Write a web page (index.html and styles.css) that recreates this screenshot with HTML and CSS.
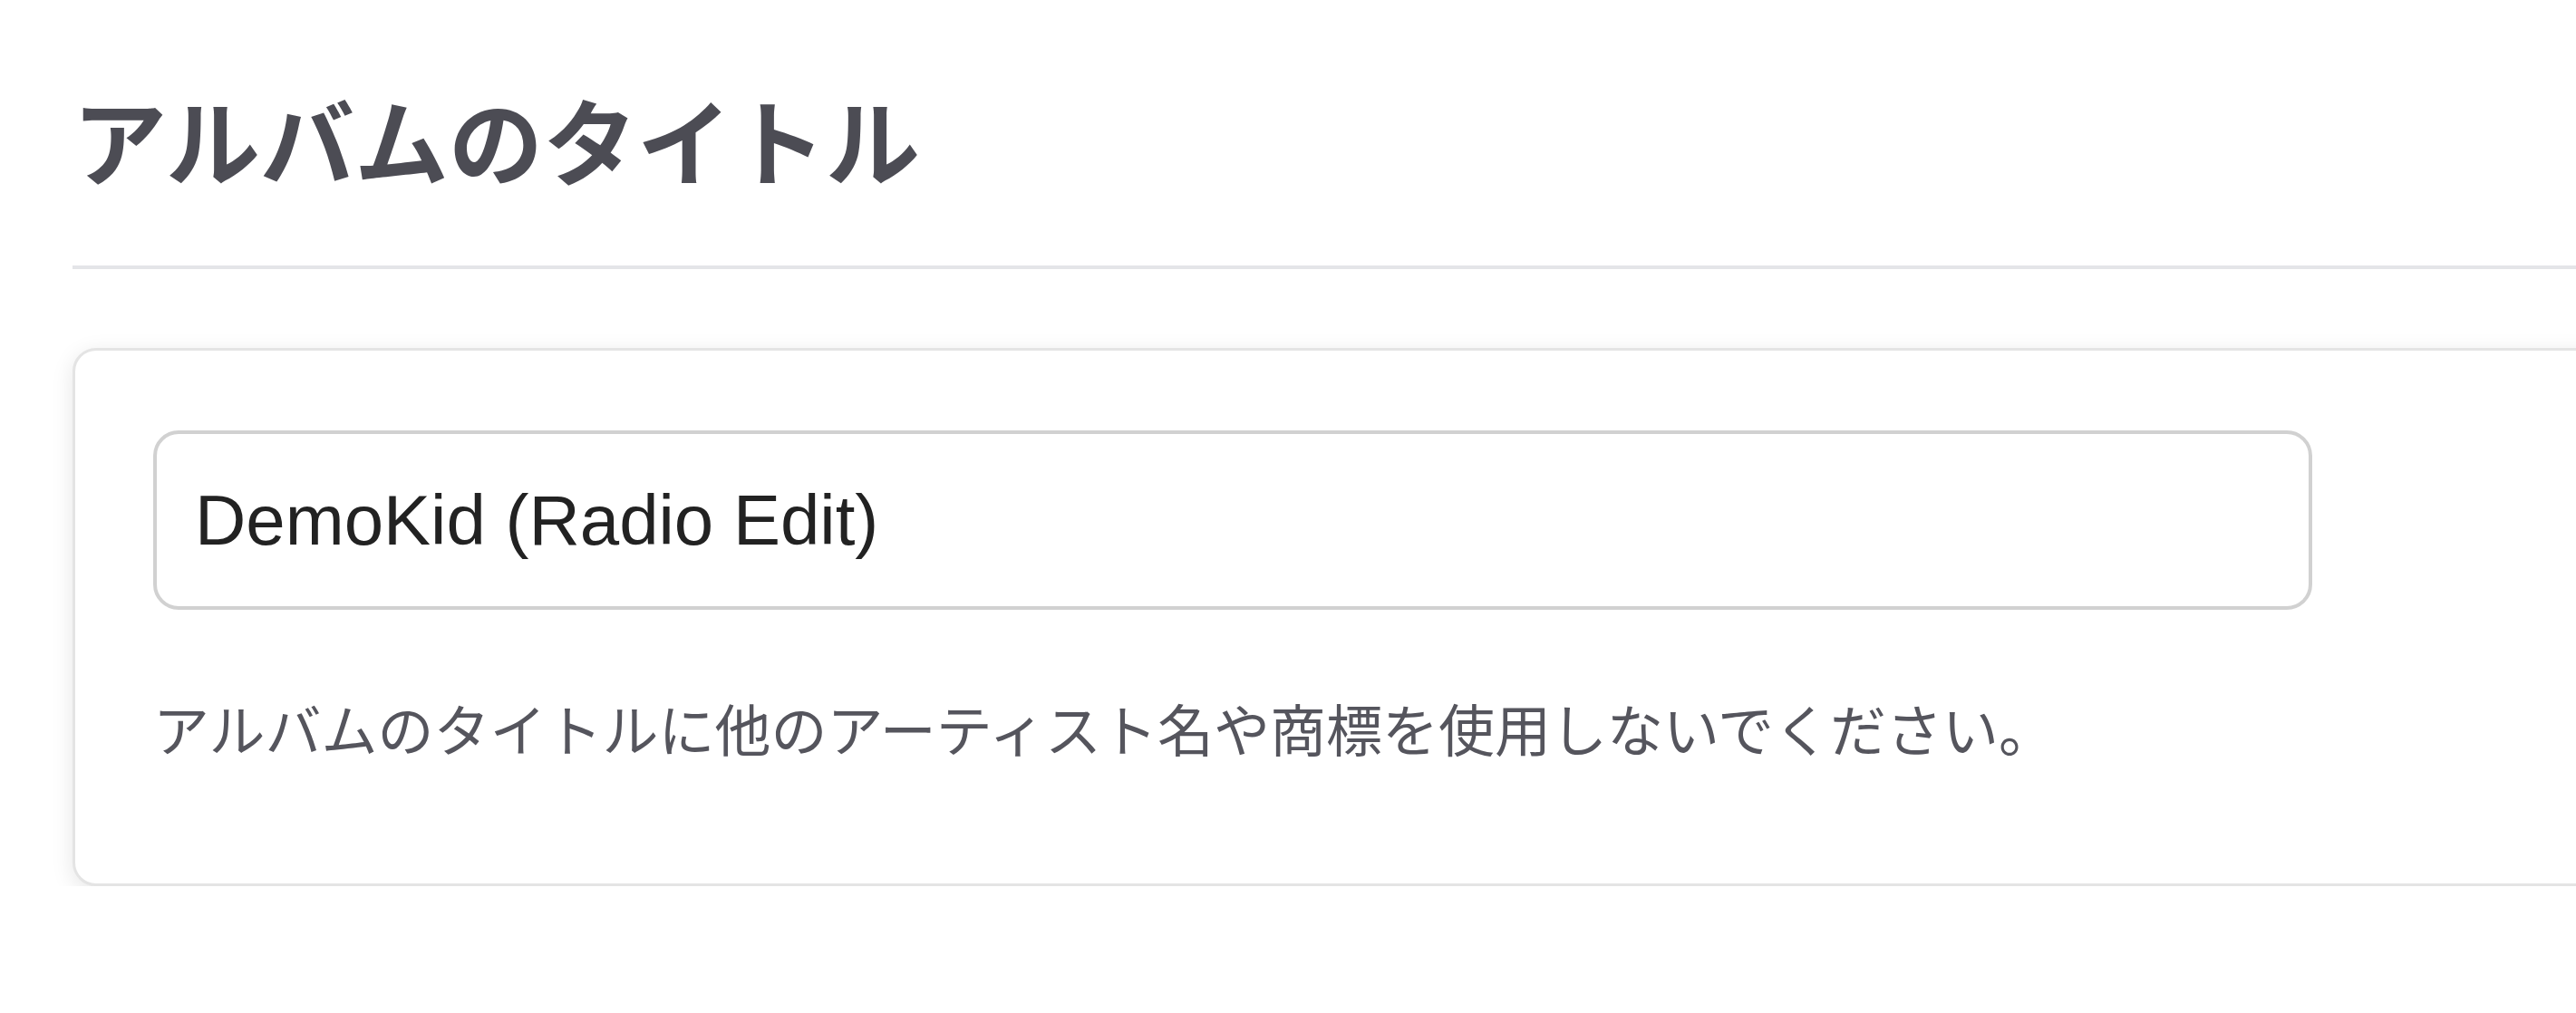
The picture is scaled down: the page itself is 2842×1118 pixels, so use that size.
FILE: index.html
```html
<!DOCTYPE html>
<html lang="ja">
<head>
    <meta charset="UTF-8">
    <meta name="viewport" content="width=device-width, initial-scale=1.0">
    <title>アルバムのタイトル</title>
    <link rel="stylesheet" href="styles.css">
</head>
<body>
    <div class="page">
        <h1 class="section-title">アルバムのタイトル</h1>
        <hr class="divider">

        <div class="card">
            <input class="title-input" type="text" value="DemoKid (Radio Edit)">
            <p class="hint">アルバムのタイトルに他のアーティスト名や商標を使用しないでください。</p>
        </div>
    </div>
</body>
</html>
```

FILE: styles.css
```css
body {
    margin: 0;
    background: #fff;
    overflow: hidden;
    font-family: 'Noto Sans CJK JP', 'Noto Sans', sans-serif;
}
.page {
    width: 3000px;
    padding: 101px 0 0 80px;
}
.section-title {
    margin: 0;
    font-size: 104px;
    line-height: 1;
    font-weight: 700;
    color: #4c4c54;
}
.divider {
    margin: 88px 0 0;
    height: 4px;
    border: none;
    background: #e4e5e8;
}
.card {
    margin-top: 87px;
    padding: 88px 86px 0;
    height: 500px;
    border: 3px solid #e4e4e4;
    border-radius: 26px;
    background: #fff;
    box-shadow: 0 6px 24px rgba(0, 0, 0, 0.1);
}
.title-input {
    display: block;
    box-sizing: border-box;
    width: 2382px;
    height: 198px;
    padding: 0 42px;
    border: 4px solid #d1d1d1;
    border-radius: 28px;
    font-family: 'Liberation Sans', Arial, sans-serif;
    font-size: 78px;
    color: #222;
    outline: none;
}
.hint {
    margin: 99px 0 0;
    font-size: 62px;
    line-height: 1;
    color: #55555d;
}
```
